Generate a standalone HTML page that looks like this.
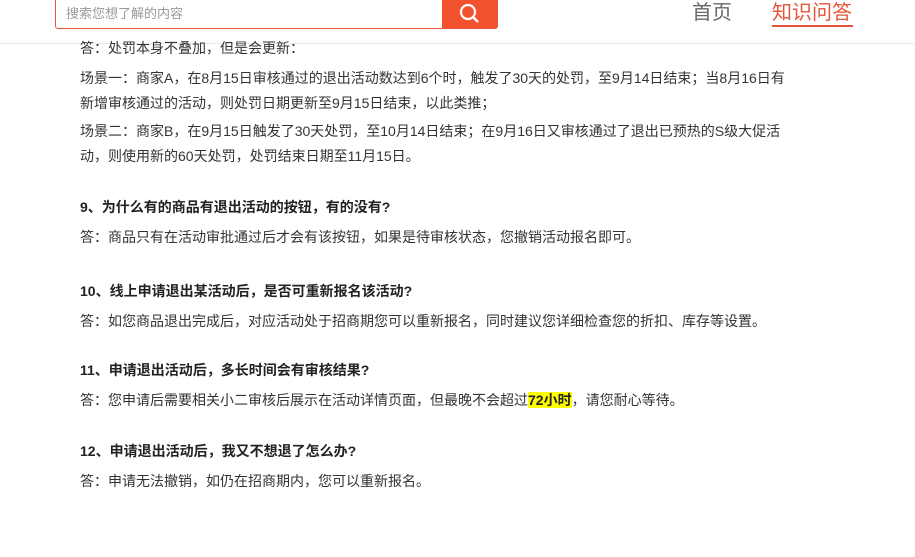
<!DOCTYPE html>
<html><head><meta charset="utf-8"><style>
body{margin:0;width:915px;height:557px;overflow:hidden;background:#fff;font-family:"Liberation Sans","Noto Sans CJK SC",sans-serif;color:#333;position:relative}
.hdr{position:absolute;left:0;top:0;width:915px;height:43px;border-bottom:1px solid #e8e8e8;background:#fff}
.search{position:absolute;left:55px;top:-10px;width:441px;height:37px;border:1px solid #e4553a;border-radius:3px;background:#fff}
.search span{position:absolute;left:10px;top:12px;font-size:13px;color:#999}
.btn{position:absolute;right:0;top:0;width:55px;height:37px;background:#f2512e}
.nav1{position:absolute;left:692px;top:-4px;font-size:20px;color:#666}
.nav2{position:absolute;left:772px;top:-4px;font-size:20px;color:#e4553a}
.ul{position:absolute;left:772px;top:25px;width:81px;height:2px;background:#e4553a}
.t{position:absolute;left:80px;font-size:14px;line-height:25px;white-space:nowrap}
.b{font-weight:bold;color:#222}
mark{background:#ff0;font-weight:bold;color:#222}
</style></head><body>
<div class="hdr">
<div class="search"><span>搜索您想了解的内容</span><div class="btn"><svg width="55" height="37" viewBox="0 0 55 37"><circle cx="26" cy="21" r="7" fill="none" stroke="#fff" stroke-width="2.2"/><line x1="31" y1="26" x2="36" y2="31" stroke="#fff" stroke-width="2.4"/></svg></div></div>
<div class="nav1">首页</div><div class="nav2">知识问答</div><div class="ul"></div>
</div>
<div class="t" style="top:36px">答：处罚本身不叠加，但是会更新：</div>
<div class="t" style="top:66px">场景一：商家A，在8月15日审核通过的退出活动数达到6个时，触发了30天的处罚，至9月14日结束；当8月16日有<br>新增审核通过的活动，则处罚日期更新至9月15日结束，以此类推；</div>
<div class="t" style="top:119px">场景二：商家B，在9月15日触发了30天处罚，至10月14日结束；在9月16日又审核通过了退出已预热的S级大促活<br>动，则使用新的60天处罚，处罚结束日期至11月15日。</div>
<div class="t b" style="top:195px">9、为什么有的商品有退出活动的按钮，有的没有?</div>
<div class="t" style="top:225px">答：商品只有在活动审批通过后才会有该按钮，如果是待审核状态，您撤销活动报名即可。</div>
<div class="t b" style="top:279px">10、线上申请退出某活动后，是否可重新报名该活动?</div>
<div class="t" style="top:309px">答：如您商品退出完成后，对应活动处于招商期您可以重新报名，同时建议您详细检查您的折扣、库存等设置。</div>
<div class="t b" style="top:358px">11、申请退出活动后，多长时间会有审核结果?</div>
<div class="t" style="top:388px">答：您申请后需要相关小二审核后展示在活动详情页面，但最晚不会超过<mark>72小时</mark>，请您耐心等待。</div>
<div class="t b" style="top:439px">12、申请退出活动后，我又不想退了怎么办?</div>
<div class="t" style="top:469px">答：申请无法撤销，如仍在招商期内，您可以重新报名。</div>
</body></html>
